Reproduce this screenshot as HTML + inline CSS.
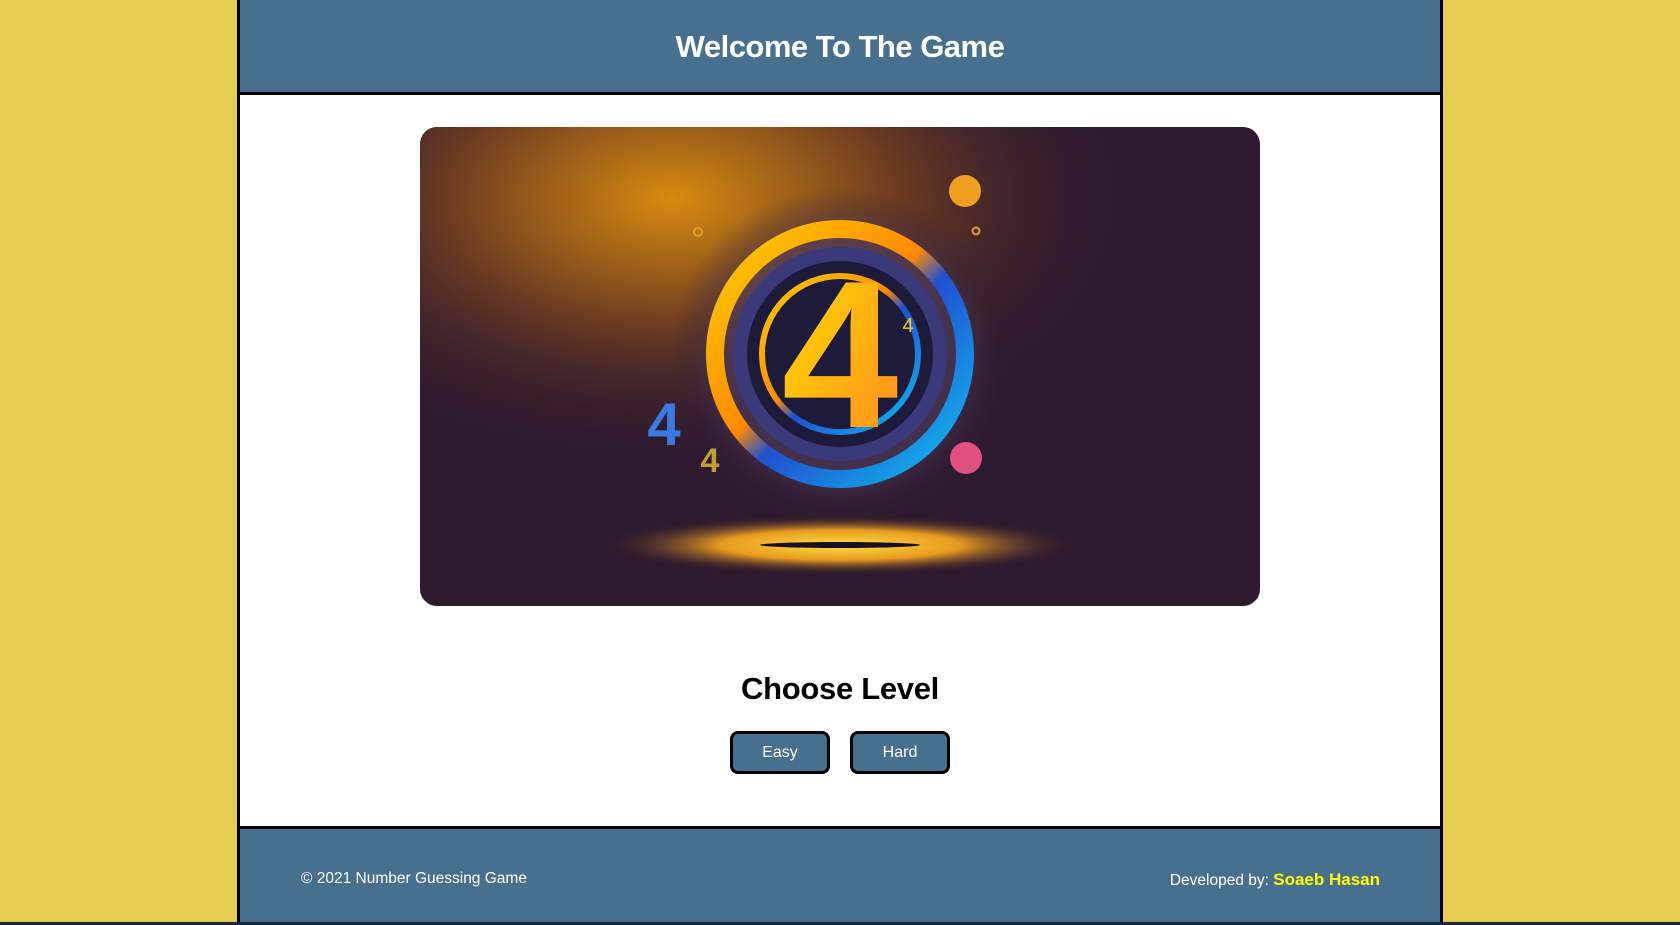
<!DOCTYPE html>
<html><head><meta charset="utf-8"><style>
*{margin:0;padding:0;box-sizing:border-box}
html,body{width:1680px;height:925px;overflow:hidden;background:#e6cd50;font-family:"Liberation Sans",sans-serif}
.wrap{position:absolute;left:237px;top:0;width:1206px;height:925px;border-left:3px solid #000;border-right:3px solid #000;background:#fff}
header{height:95px;background:#476f8e;border-bottom:3px solid #000;color:#fff;font-weight:bold;font-size:31px;text-align:center;line-height:94px;letter-spacing:-0.5px}
.img{position:absolute;left:180px;top:127px;width:840px;height:479px;border-radius:17px;overflow:hidden}
h2{position:absolute;left:0;right:0;top:671px;text-align:center;font-size:31px;font-weight:bold;color:#000;letter-spacing:-0.3px}
.btn{position:absolute;top:731px;width:100px;height:43px;background:#476f8e;border:3px solid #000;border-radius:8px;color:#fff;font-size:16px;text-align:center;line-height:37px}
footer{position:absolute;left:0;right:0;top:826px;height:99px;background:#476f8e;border-top:3px solid #000;color:#fff;font-size:15.5px}
.l{position:absolute;left:61px;top:41px}
.r{position:absolute;right:60px;top:41px}
.r b{color:#ffff00;font-size:17px}
.strip{position:absolute;left:0;top:922px;width:1680px;height:3px;background:#1a2a3a}
</style></head><body>
<div class="wrap">
<header>Welcome To The Game</header>
<div class="img"><svg width="840" height="479" viewBox="0 0 840 479">
<defs>
<radialGradient id="bg1" cx="0.3" cy="0.15" r="0.55"><stop offset="0" stop-color="#d88a10"/><stop offset="0.5" stop-color="#6a3a22"/><stop offset="1" stop-color="#2e1a2e" stop-opacity="0"/></radialGradient>
<radialGradient id="glow" cx="0.5" cy="0.5" r="0.5"><stop offset="0" stop-color="#ffe040"/><stop offset="0.5" stop-color="#e89a20"/><stop offset="1" stop-color="#2e1a2e" stop-opacity="0"/></radialGradient>
<radialGradient id="halo" cx="0.5" cy="0.5" r="0.5"><stop offset="0.7" stop-color="#4a3a5a"/><stop offset="1" stop-color="#2e1a2e" stop-opacity="0"/></radialGradient>
<linearGradient id="ring" x1="0" y1="0" x2="1" y2="1"><stop offset="0" stop-color="#ffd000"/><stop offset="0.45" stop-color="#ff8a00"/><stop offset="0.55" stop-color="#2050d0"/><stop offset="1" stop-color="#10c0f0"/></linearGradient>
<linearGradient id="four" x1="0" y1="0" x2="1" y2="1"><stop offset="0" stop-color="#ffe000"/><stop offset="1" stop-color="#ff8a20"/></linearGradient>
</defs>
<rect width="840" height="479" fill="#2e1a2e"/>
<rect width="840" height="479" fill="url(#bg1)"/>
<circle cx="420" cy="230" r="170" fill="url(#halo)" opacity="0.7"/>
<ellipse cx="420" cy="418" rx="240" ry="30" fill="url(#glow)"/>
<ellipse cx="420" cy="418" rx="80" ry="3" fill="#1a1020"/>
<circle cx="420" cy="227" r="125" fill="none" stroke="url(#ring)" stroke-width="18"/>
<circle cx="420" cy="227" r="100" fill="#1e1a3a" stroke="#3a3a7a" stroke-width="14"/>
<circle cx="420" cy="227" r="78" fill="none" stroke="url(#ring)" stroke-width="6"/>
<text x="420" y="300" font-family="Liberation Sans" font-weight="bold" font-size="210" fill="url(#four)" text-anchor="middle">4</text>
<text x="244" y="318" font-family="Liberation Sans" font-weight="bold" font-size="60" fill="#3a7ae0" text-anchor="middle">4</text>
<text x="290" y="345" font-family="Liberation Sans" font-weight="bold" font-size="34" fill="#c0a030" text-anchor="middle">4</text>
<text x="488" y="205" font-family="Liberation Sans" font-size="20" fill="#f0d020" text-anchor="middle">4</text>
<circle cx="545" cy="64" r="16" fill="#f0a020"/>
<circle cx="546" cy="331" r="16" fill="#e05080"/>
<circle cx="278" cy="105" r="4" fill="none" stroke="#e0a020" stroke-width="2"/>
<circle cx="556" cy="104" r="3.5" fill="none" stroke="#e0a020" stroke-width="2"/>
</svg></div>
<h2>Choose Level</h2>
<div class="btn" style="left:490px">Easy</div>
<div class="btn" style="left:610px">Hard</div>
<footer><span class="l">© 2021 Number Guessing Game</span><span class="r">Developed by: <b>Soaeb Hasan</b></span></footer>
</div>
<div class="strip"></div>
</body></html>
